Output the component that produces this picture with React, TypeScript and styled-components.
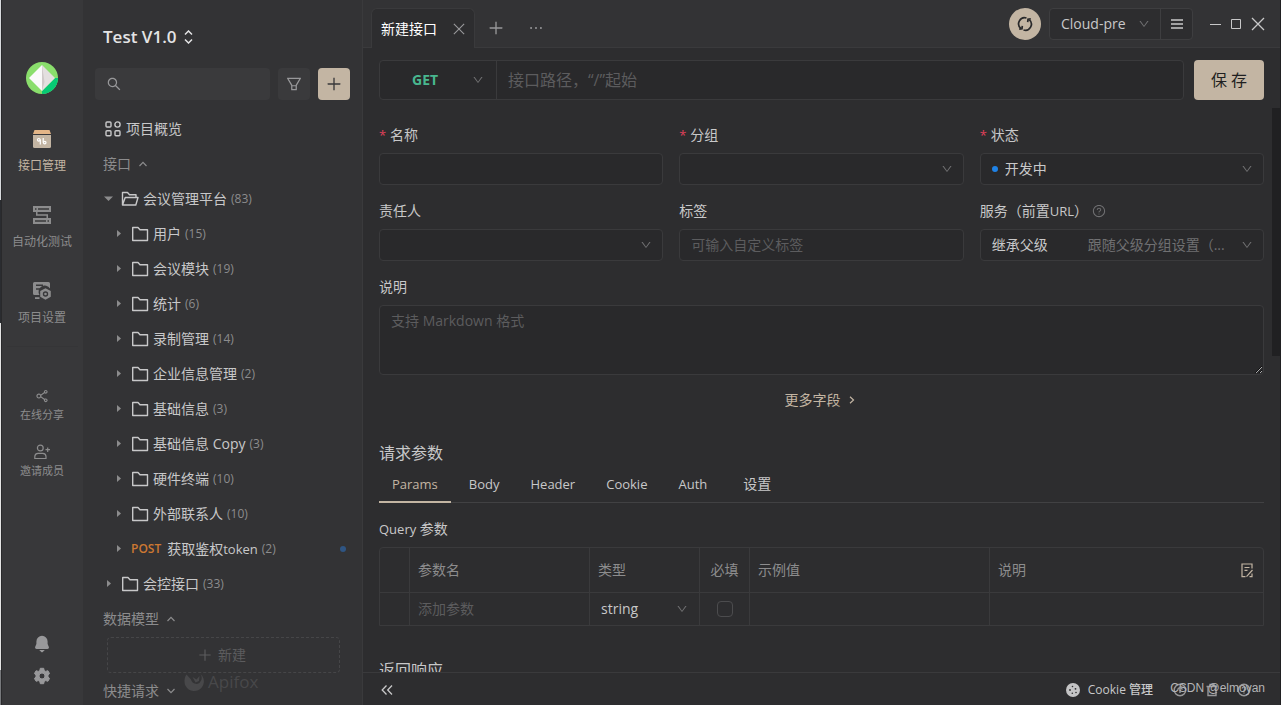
import React from "react";
import styled, { createGlobalStyle } from "styled-components";
import {
  AiOutlineClose,
  AiOutlineDown,
  AiOutlineEllipsis,
  AiOutlineFilter,
  AiOutlinePlus,
  AiOutlineQuestionCircle,
  AiOutlineSearch,
  AiOutlineShareAlt,
} from "react-icons/ai";

const c = {
  rail: "#38383a",
  side: "#333335",
  main: "#2d2d2f",
  field: "#29292b",
  line: "#3a3a3c",
  text: "#c8c8c9",
  soft: "#8c8c8d",
  faint: "#5c5c5e",
  accent: "#c3b5a3",
};

const GlobalStyle = createGlobalStyle`
  * { box-sizing: border-box; }
  body {
    margin: 0;
    background: ${c.main};
    color: ${c.text};
    font-family: "Open Sans", "Noto Sans CJK SC", sans-serif;
    font-size: 14px;
    line-height: 22px;
  }
  button, input, select, textarea {
    font: inherit;
    color: inherit;
    margin: 0;
    padding: 0;
    border: 0;
    background: none;
    outline: none;
  }
  button { cursor: pointer; }
  select { appearance: none; }
  svg { display: block; flex: none; }
  h1, h2, h3, p, ul { margin: 0; padding: 0; font-weight: 400; }
  ul { list-style: none; }
`;

const Shell = styled.div`
  display: flex;
  height: 100vh;
  overflow: hidden;
`;

const DesktopEdge = styled.div`
  width: 2px;
  flex: none;
  border-right: 1px solid #29292b;
  background: linear-gradient(#d8dadd 0 200px, #2a2c30 200px 323px, #e4e4e4 323px 670px, #77797c 670px);
`;

const Latin = styled.span`
  font-size: 13px;
`;

/* ---------- navigation rail ---------- */

const Rail = styled.nav`
  width: 81px;
  flex: none;
  background: ${c.rail};
  display: flex;
  flex-direction: column;
  align-items: center;
  padding: 62px 1px 20px 0;
`;

const RailGroup = styled.div<{ $gap: number; $top: number }>`
  display: flex;
  flex-direction: column;
  gap: ${(p) => p.$gap}px;
  margin-top: ${(p) => p.$top}px;
`;

const RailItem = styled.button<{ $active?: boolean; $small?: boolean }>`
  display: flex;
  flex-direction: column;
  align-items: center;
  gap: ${(p) => (p.$small ? 2 : 9)}px;
  width: 80px;
  font-size: ${(p) => (p.$small ? 11 : 12)}px;
  line-height: 18px;
  color: ${(p) => (p.$active ? c.accent : c.soft)};
`;

const RailDivider = styled.div`
  width: 71px;
  height: 1px;
  margin-top: 19px;
  background: #353537;
`;

const RailFoot = styled.div`
  margin-top: auto;
  display: flex;
  flex-direction: column;
  gap: 14px;
  color: #98989a;
`;

/* ---------- tree sidebar ---------- */

const Sidebar = styled.aside`
  position: relative;
  width: 280px;
  flex: none;
  background: ${c.side};
  border-right: 1px solid ${c.line};
  padding: 23px 12px 0;
  overflow: hidden;
`;

const ProjectTitle = styled.button`
  display: flex;
  align-items: center;
  gap: 7px;
  margin-left: 8px;
  height: 28px;
  font-size: 17px;
  font-weight: 600;
  color: #e4e4e5;
`;

const SearchRow = styled.div`
  display: flex;
  gap: 8px;
  margin: 17px 0 11px;
`;

const SearchBox = styled.label`
  flex: 1;
  min-width: 0;
  height: 32px;
  display: flex;
  align-items: center;
  gap: 8px;
  padding: 0 11px;
  border-radius: 4px;
  background: #3a3a3c;
  color: #98989a;
  input { flex: 1; min-width: 0; }
`;

const SquareButton = styled.button<{ $accent?: boolean }>`
  width: 32px;
  height: 32px;
  display: grid;
  place-items: center;
  border-radius: 4px;
  background: ${(p) => (p.$accent ? c.accent : "#3a3a3c")};
  color: ${(p) => (p.$accent ? "#38383a" : "#98989a")};
`;

const Row = styled.li<{ $indent: number }>`
  display: flex;
  align-items: center;
  height: 35px;
  padding-left: ${(p) => p.$indent}px;
  padding-right: 4px;
`;

const SectionRow = styled(Row)`
  gap: 8px;
  color: ${c.soft};
`;

const TreeButton = styled.button`
  display: flex;
  align-items: center;
  gap: 4px;
  white-space: nowrap;
  svg + svg { margin-left: 4px; }
`;

const Count = styled.span`
  font-size: 12px;
  color: ${c.soft};
`;

const Method = styled.span`
  margin: 0 2px 0 4px;
  font-size: 12px;
  font-weight: 600;
  color: #cd7832;
`;

const StatusDot = styled.span<{ $color: string }>`
  width: 6px;
  height: 6px;
  flex: none;
  border-radius: 50%;
  background: ${(p) => p.$color};
`;

const PushRight = styled.span`
  margin-left: auto;
`;

const NewButton = styled.button`
  display: flex;
  align-items: center;
  justify-content: center;
  gap: 5px;
  width: calc(100% - 22px);
  height: 36px;
  margin: 1px 0 0 12px;
  padding-right: 4px;
  border: 1px dashed #464648;
  border-radius: 4px;
  color: #5c5c5e;
`;

const BrandMark = styled.div`
  position: absolute;
  left: 101px;
  bottom: 12px;
  display: flex;
  align-items: center;
  gap: 4px;
  font-size: 17px;
  font-weight: 500;
  color: #48484a;
`;

/* ---------- main area ---------- */

const Main = styled.main`
  flex: 1;
  min-width: 0;
  display: flex;
  flex-direction: column;
  border-right: 1px solid #202022;
`;

const TopBar = styled.header`
  height: 48px;
  flex: none;
  display: flex;
  align-items: flex-start;
  padding: 8px 15px 0 8px;
  background: ${c.side};
  box-shadow: inset 0 -1px ${c.line};
  color: #98989a;
`;

const DocTab = styled.div`
  display: flex;
  align-items: center;
  justify-content: space-between;
  width: 104px;
  height: 40px;
  padding: 0 9px;
  border: 1px solid ${c.line};
  border-bottom: 0;
  border-radius: 6px 6px 0 0;
  background: ${c.main};
  span { color: #fff; }
`;

const TabTools = styled.div`
  display: flex;
  align-items: center;
  gap: 22px;
  height: 40px;
  margin-left: 12px;
`;

const TopRight = styled.div`
  display: flex;
  align-items: center;
  height: 32px;
  margin-left: auto;
  color: ${c.text};
`;

const SyncButton = styled.button`
  width: 32px;
  height: 32px;
  display: grid;
  place-items: center;
  border-radius: 50%;
  background: ${c.accent};
  color: #29292b;
`;

const EnvBox = styled.div`
  display: flex;
  height: 32px;
  margin: 0 16px 0 8px;
  border: 1px solid #3e3e40;
  border-radius: 4px;
  background: ${c.main};
`;

const EnvSelect = styled.label`
  display: flex;
  align-items: center;
  width: 110px;
  padding: 0 10px 0 11px;
  select { flex: 1; min-width: 0; }
  svg { color: #707072; }
`;

const EnvMenu = styled.button`
  width: 32px;
  display: grid;
  place-items: center;
  border-left: 1px solid #3e3e40;
`;

const WindowButtons = styled.div`
  display: flex;
  align-items: center;
  gap: 8px;
`;

const UrlRow = styled.div`
  display: flex;
  gap: 10px;
  padding: 12px 16px 8px;
`;

const UrlBox = styled.div`
  flex: 1;
  min-width: 0;
  display: flex;
  height: 40px;
  border: 1px solid ${c.line};
  border-radius: 4px;
  background: ${c.field};
  font-size: 16px;
  input { flex: 1; min-width: 0; padding: 0 11px; }
  input::placeholder { color: ${c.faint}; }
`;

const MethodSelect = styled.label`
  display: flex;
  align-items: center;
  width: 117px;
  padding: 0 12px 0 32px;
  border-right: 1px solid ${c.line};
  font-size: 14px;
  font-weight: 700;
  color: #48b78f;
  select { flex: 1; min-width: 0; }
  svg { color: #707072; }
`;

const SaveButton = styled.button`
  width: 70px;
  height: 40px;
  border-radius: 4px;
  background: ${c.accent};
  color: #1f1f21;
  font-size: 16px;
`;

const Scroller = styled.div`
  flex: 1;
  min-height: 0;
  display: flex;
  overflow: hidden;
`;

const ScrollTrack = styled.div`
  width: 8px;
  flex: none;
`;

const ScrollThumb = styled.div`
  height: 44%;
  background: #202022;
`;

const Content = styled.form`
  flex: 1;
  min-width: 0;
  padding: 16px 8px 0 16px;
`;

const Fields = styled.div`
  display: grid;
  grid-template-columns: repeat(3, 1fr);
  gap: 15px 16px;
`;

const Field = styled.div`
  min-width: 0;
`;

const Label = styled.label`
  display: flex;
  align-items: center;
  height: 22px;
  margin-bottom: 7px;
  svg { margin-left: 4px; color: #707072; }
`;

const Star = styled.span`
  width: 11px;
  color: #e0405a;
  font-size: 13px;
`;

const InputBox = styled.div`
  display: flex;
  align-items: center;
  gap: 7px;
  height: 32px;
  padding: 0 10px 0 11px;
  border: 1px solid ${c.line};
  border-radius: 4px;
  background: ${c.field};
  input, select { flex: 1; min-width: 0; }
  input::placeholder { color: ${c.faint}; }
  svg { color: #707072; }
`;

const ServiceBox = styled(InputBox)`
  select { flex: 0 0 89px; }
`;

const ServiceHint = styled.span`
  flex: 1;
  white-space: nowrap;
  overflow: hidden;
  color: #707072;
`;

const Description = styled.div`
  margin-top: 15px;
`;

const TextArea = styled.textarea`
  display: block;
  width: 100%;
  height: 70px;
  padding: 4px 11px;
  border: 1px solid ${c.line};
  border-radius: 4px;
  background: ${c.field};
  resize: vertical;
  &::placeholder { color: ${c.faint}; }
`;

const MoreButton = styled.button`
  display: flex;
  align-items: center;
  gap: 8px;
  margin: 14px auto 0;
  padding-right: 4px;
  color: ${c.accent};
`;

const SectionTitle = styled.h2<{ $top: number }>`
  margin-top: ${(p) => p.$top}px;
  font-size: 16px;
  line-height: 24px;
`;

const ParamTabs = styled.div`
  display: flex;
  gap: 5px;
  margin-top: 2px;
  border-bottom: 1px solid #414143;
`;

const ParamTab = styled.button<{ $active?: boolean }>`
  height: 36px;
  margin-bottom: -1px;
  padding: 0 13px;
  border-bottom: 2px solid ${(p) => (p.$active ? c.accent : "transparent")};
  color: ${(p) => (p.$active ? c.accent : c.text)};
  &:last-child { padding: 0 18px; }
`;

const TableTitle = styled.h3`
  margin: 15px 0 7px;
  font-size: 14px;
`;

const TableFrame = styled.div`
  border: 1px solid ${c.line};
  border-radius: 4px 4px 0 0;
`;

const ParamTable = styled.table`
  width: 100%;
  table-layout: fixed;
  border-collapse: separate;
  border-spacing: 0;
  th, td {
    padding: 0 8px;
    text-align: left;
    font-weight: 400;
    border-right: 1px solid ${c.line};
  }
  th:last-child, td:last-child { border-right: 0; }
  th { height: 45px; color: ${c.soft}; border-bottom: 1px solid ${c.line}; }
  td { height: 32px; }
  input::placeholder { color: ${c.faint}; }
  input[type="text"] { width: 100%; display: block; }
`;

const CenterTh = styled.th`
  && { padding: 0; text-align: center; }
`;

const HeadCell = styled.div`
  display: flex;
  align-items: center;
  justify-content: space-between;
  padding-right: 1px;
`;

const TypeSelect = styled.label`
  display: flex;
  align-items: center;
  padding: 0 3px;
  select { flex: 1; min-width: 0; }
  svg { color: #707072; }
`;

const Check = styled.input`
  appearance: none;
  display: block;
  width: 16px;
  height: 16px;
  && { margin: 0 auto; border: 1px solid #4c4c4e; }
  border-radius: 4px;
`;

const Footer = styled.footer`
  position: relative;
  flex: none;
  display: flex;
  align-items: center;
  height: 33px;
  padding: 2px 29px 0 18px;
  border-top: 1px solid ${c.line};
`;

const FootRight = styled.div`
  display: flex;
  align-items: center;
  gap: 18px;
  margin-left: auto;
`;

const CookieButton = styled.button`
  display: flex;
  align-items: center;
  gap: 8px;
  margin-right: 2px;
  font-size: 12px;
  font-weight: 500;
`;

const Credit = styled.span`
  position: absolute;
  right: 15px;
  top: 4px;
  font-family: "Liberation Sans", sans-serif;
  font-size: 12px;
  color: #b4b4b6;
`;

/* ---------- icons ---------- */

const Logo = () => (
  <svg width="32" height="32" viewBox="0 0 32 32">
    <circle cx="16" cy="16" r="16" fill="#8ade6c" />
    <path d="M32 16A16 16 0 0 1 16 32L16 29 29 16Z" fill="#07c974" />
    <path d="M16 3 3 16 16 29Z" fill="#fafafa" />
    <path d="M16 3 29 16 16 29Z" fill="#e3dfdf" />
    <path d="M16 3 18.500 20 16 29Z" fill="#cfc9c9" />
  </svg>
);

const ApiIcon = () => (
  <svg width="18" height="18" viewBox="0 0 18 18">
    <path d="M1.500 0h15L18 4H0Z" fill="#e3b587" />
    <path d="M0 5h18v11.500a1.500 1.500 0 0 1-1.500 1.500h-15A1.500 1.500 0 0 1 0 16.500Z" fill="#c3b5a3" />
    <g fill="none" stroke="#fff" strokeWidth="1.200">
      <circle cx="5.800" cy="9.800" r="1.300" />
      <path d="M7.300 9.500V14.500M10.200 8V12.500" />
      <circle cx="11.700" cy="12.600" r="1.300" />
    </g>
  </svg>
);

const AutoIcon = () => (
  <svg width="18" height="18" viewBox="0 0 18 18" fill="currentColor">
    <path fillRule="evenodd" d="M0 0h18v6H0ZM2 2.300v1.400h1.500V2.300ZM5 2.300v1.400h11V2.300Z" />
    <path fillRule="evenodd" d="M0 12h18v6H0ZM2 14.300v1.400h11v-1.400ZM14.500 14.300v1.400H16v-1.400Z" />
    <path d="M3 6h1.500v2.200H15V12h-1.500V9.800H3Z" />
  </svg>
);

const ProjectIcon = () => (
  <svg width="18" height="18" viewBox="0 0 18 18" fill="currentColor">
    <path d="M1.500 0h14A1.500 1.500 0 0 1 17 1.500V6.400A6.200 6.200 0 0 0 6.500 13H1.500A1.500 1.500 0 0 1 0 11.500v-10A1.500 1.500 0 0 1 1.500 0Z" />
    <path d="M3 3.300h7M3 7h4" stroke="#38383a" strokeWidth="1.400" />
    <path d="M2 15.200h4.500v1.800H2Z" />
    <path fillRule="evenodd" d="M12.500 6.300 17.800 9v5.800L12.500 17.800 7.200 14.800V9ZM12.500 9.300a2.700 2.700 0 1 0 0 5.400 2.700 2.700 0 0 0 0-5.400Z" />
    <circle cx="12.500" cy="12" r="1.300" />
  </svg>
);

const InviteIcon = () => (
  <svg width="16" height="16" viewBox="0 0 16 16" fill="none" stroke="currentColor" strokeWidth="1.200">
    <circle cx="6.300" cy="4" r="2.900" />
    <path d="M.8 14.500V12.500A3.300 3.300 0 0 1 4 9.300h4.800A3.300 3.300 0 0 1 12 12.500v2ZM11.500 5.700h4.500M13.700 3.400V8" />
  </svg>
);

const BellIcon = () => (
  <svg width="18" height="18" viewBox="0 0 18 18" fill="currentColor">
    <path d="M9 .8A5.600 5.600 0 0 1 14.600 6.400V9L16 12.200Q16 14 14.500 14H3.500Q2 14 2 12.200L3.400 9V6.400A5.600 5.600 0 0 1 9 .8ZM6.200 15h5.600L9.500 17.300h-1Z" />
  </svg>
);

const GearIcon = () => (
  <svg width="18" height="18" viewBox="0 0 18 18" fill="currentColor" stroke="currentColor" strokeLinejoin="round">
    <path
      fillRule="evenodd"
      d="M7.300 1.300h3.400l.5 2.200 1.500.9 2.200-.7 1.700 2.900-1.600 1.300v2.200l1.600 1.300-1.700 2.900-2.200-.7-1.500.9-.5 2.200H7.300l-.5-2.200-1.500-.9-2.200.7-1.700-2.900L3 10.100V7.900L1.400 6.600l1.700-2.900 2.200.7 1.500-.9ZM9 6a3 3 0 1 0 0 6 3 3 0 0 0 0-6Z"
    />
  </svg>
);

const SwitchIcon = () => (
  <svg width="9" height="14" viewBox="0 0 9 14" fill="none" stroke="currentColor" strokeWidth="1.500">
    <path d="M1 4.500 4.500 1 8 4.500M1 9.500 4.500 13 8 9.500" />
  </svg>
);

const OverviewIcon = () => (
  <svg width="17" height="16" viewBox="0 0 17 16" fill="none" stroke="currentColor" strokeWidth="1.400">
    <rect x="1" y="1" width="5" height="5" rx="1" />
    <circle cx="12.500" cy="3.500" r="2.600" />
    <rect x="1" y="9.700" width="5" height="5" rx="1" />
    <rect x="10" y="9.700" width="5" height="5" rx="1" />
  </svg>
);

const Caret = ({ open = false }: { open?: boolean }) => (
  <svg width="9" height="9" viewBox="0 0 9 9" fill="#8c8c8d">
    <path d={open ? "M0 2.500h9L4.500 7Z" : "M3 1v7L7 4.500Z"} />
  </svg>
);

const Fold = ({ up = false }: { up?: boolean }) => (
  <svg width="8" height="6" viewBox="0 0 8 6" fill="none" stroke="currentColor" strokeWidth="1.200">
    <path d={up ? "M.5 5 4 1.300 7.500 5" : "M.5 1 4 4.700 7.500 1"} />
  </svg>
);

const FolderIcon = ({ open = false }: { open?: boolean }) => (
  <svg width="18" height="16" viewBox="0 0 18 16" fill="none" stroke="currentColor" strokeWidth="1.400" strokeLinejoin="round">
    {open ? (
      <path d="M1.500 14V1.500H6.500L8.500 3.800H15V6.500M1.500 14 4.200 6.500H17L14.800 14Z" />
    ) : (
      <path d="M1.700 1.500H7L9 3.700H16.500V14.500H1.700Z" />
    )}
  </svg>
);

const FoxIcon = () => (
  <svg width="20" height="20" viewBox="0 0 20 20" fill="currentColor">
    <path d="M2.500 2.500 7 7.500A6.500 5.500 0 0 0 13 12 6.500 6.500 0 0 0 16.500 2 9.700 9.700 0 1 1 .5 9 9.500 9.500 0 0 1 2.500 2.500Z" />
    <path d="M8.500 5 12.500 7.500 15.500 4 15 9 11.500 10.500Z" />
  </svg>
);

const SyncIcon = () => (
  <svg width="16" height="16" viewBox="0 0 16 16" fill="none" stroke="currentColor" strokeWidth="1.700">
    <path d="M9.500 2A6 6 0 0 0 3.800 12.300M2.200 13.200 5 12.800 5.300 9.800" />
    <path d="M6.500 14A6 6 0 0 0 12.200 3.700M13.800 2.800 11 3.200 10.700 6.200" />
  </svg>
);

const MenuIcon = () => (
  <svg width="12" height="10" viewBox="0 0 12 10" fill="none" stroke="currentColor" strokeWidth="1.400">
    <path d="M0 1h12M0 5h12M0 9h12" />
  </svg>
);

const MinimizeIcon = () => (
  <svg width="13" height="13" viewBox="0 0 13 13" stroke="currentColor">
    <path d="M1 6.500h11" />
  </svg>
);

const MaximizeIcon = () => (
  <svg width="13" height="13" viewBox="0 0 13 13" fill="none" stroke="currentColor">
    <path d="M1.500 1.500h9v9h-9Z" />
  </svg>
);

const CloseIcon = ({ size = 14 }: { size?: number }) => (
  <svg width={size} height={size} viewBox="0 0 14 14" stroke="currentColor" strokeWidth="1.300">
    <path d="M1 1 13 13M13 1 1 13" />
  </svg>
);

const NextIcon = () => (
  <svg width="6" height="8" viewBox="0 0 6 8" fill="none" stroke="currentColor" strokeWidth="1.200">
    <path d="M1 .8 4.500 4 1 7.200" />
  </svg>
);

const BulkEditIcon = () => (
  <svg width="13" height="15" viewBox="0 0 13 15" fill="none" stroke="#c3b5a3" strokeWidth="1.200">
    <path d="M11 5.500V1H1v12.700h3.500M3.500 4.500h5M3.500 7.300h3M5.500 13.700 11.500 7M8.500 13.700H11V10.500" />
  </svg>
);

const CollapseIcon = () => (
  <svg width="12" height="10" viewBox="0 0 12 10" fill="none" stroke="currentColor" strokeWidth="1.300">
    <path d="M5.500.5 1.200 5 5.500 9.500M11 .5 6.700 5 11 9.500" />
  </svg>
);

const CookieIcon = () => (
  <svg width="14" height="14" viewBox="0 0 14 14">
    <circle cx="7" cy="7" r="7" fill="#c4c4c5" />
    <g fill="#2d2d2f">
      <circle cx="6.500" cy="3.500" r=".8" />
      <circle cx="4" cy="7" r=".9" />
      <circle cx="9.500" cy="5.800" r=".9" />
      <circle cx="6.300" cy="10.300" r=".8" />
      <circle cx="10" cy="9.500" r=".8" />
    </g>
  </svg>
);

const UploadIcon = () => (
  <svg width="14" height="14" viewBox="0 0 14 14" fill="none" stroke="#98989a" strokeWidth="1.400">
    <circle cx="7" cy="7" r="5.800" />
    <path d="M7 10V4M4.500 6.500 7 4l2.500 2.500" />
  </svg>
);

const TrashIcon = () => (
  <svg width="14" height="14" viewBox="0 0 14 14" fill="none" stroke="#98989a" strokeWidth="1.400">
    <path d="M1.500 3.500h11M3 3.500V12.500h8V3.500M5 3V1.500h4V3" />
  </svg>
);

const HelpIcon = () => (
  <svg width="14" height="14" viewBox="0 0 14 14" fill="none" stroke="#98989a" strokeWidth="1.400">
    <circle cx="7" cy="7" r="5.800" />
    <path d="M5.200 5.600a1.800 1.800 0 1 1 2.500 1.700L7 8.300M7 9.500v1" />
  </svg>
);

/* ---------- data ---------- */

const folders: { name: React.ReactNode; count: number }[] = [
  { name: "用户", count: 15 },
  { name: "会议模块", count: 19 },
  { name: "统计", count: 6 },
  { name: "录制管理", count: 14 },
  { name: "企业信息管理", count: 2 },
  { name: "基础信息", count: 3 },
  { name: "基础信息 Copy", count: 3 },
  { name: "硬件终端", count: 10 },
  { name: "外部联系人", count: 10 },
];

const paramTabs = ["Params", "Body", "Header", "Cookie", "Auth"];

export default function App() {
  return (
    <Shell>
      <GlobalStyle />
      <DesktopEdge />
      <Rail>
        <Logo />
        <RailGroup $gap={31} $top={36}>
          <RailItem $active><ApiIcon />接口管理</RailItem>
          <RailItem><AutoIcon />自动化测试</RailItem>
          <RailItem><ProjectIcon />项目设置</RailItem>
        </RailGroup>
        <RailDivider />
        <RailGroup $gap={20} $top={41}>
          <RailItem $small><AiOutlineShareAlt size={16} />在线分享</RailItem>
          <RailItem $small><InviteIcon />邀请成员</RailItem>
        </RailGroup>
        <RailFoot>
          <button type="button" aria-label="通知"><BellIcon /></button>
          <button type="button" aria-label="设置"><GearIcon /></button>
        </RailFoot>
      </Rail>

      <Sidebar>
        <ProjectTitle>Test V1.0 <SwitchIcon /></ProjectTitle>
        <SearchRow>
          <SearchBox>
            <AiOutlineSearch size={16} />
            <input type="text" aria-label="搜索" />
          </SearchBox>
          <SquareButton aria-label="筛选"><AiOutlineFilter size={18} /></SquareButton>
          <SquareButton $accent aria-label="添加"><AiOutlinePlus size={18} /></SquareButton>
        </SearchRow>
        <ul>
          <Row $indent={10}><TreeButton><OverviewIcon />项目概览</TreeButton></Row>
          <SectionRow $indent={8}>接口 <Fold up /></SectionRow>
          <Row $indent={9}>
            <TreeButton><Caret open /><FolderIcon open />会议管理平台 <Count>(83)</Count></TreeButton>
          </Row>
          {folders.map((f, i) => (
            <Row key={i} $indent={19}>
              <TreeButton><Caret /><FolderIcon /><span>{f.name}</span><Count>({f.count})</Count></TreeButton>
            </Row>
          ))}
          <Row $indent={19}>
            <TreeButton>
              <Caret /><Method>POST</Method><span>获取鉴权<Latin>token</Latin></span><Count>(2)</Count>
            </TreeButton>
            <PushRight><StatusDot as="div" $color="#2f5583" /></PushRight>
          </Row>
          <Row $indent={9}>
            <TreeButton><Caret /><FolderIcon />会控接口 <Count>(33)</Count></TreeButton>
          </Row>
          <SectionRow $indent={8}>数据模型 <Fold up /></SectionRow>
          <li><NewButton><AiOutlinePlus size={16} />新建</NewButton></li>
          <SectionRow $indent={8}>快捷请求 <Fold /></SectionRow>
        </ul>
        <BrandMark><FoxIcon />Apifox</BrandMark>
      </Sidebar>

      <Main>
        <TopBar>
          <DocTab><span>新建接口</span><button type="button" aria-label="关闭标签"><CloseIcon size={12} /></button></DocTab>
          <TabTools>
            <button type="button" aria-label="新标签"><AiOutlinePlus size={18} /></button>
            <button type="button" aria-label="更多"><AiOutlineEllipsis size={18} /></button>
          </TabTools>
          <TopRight>
            <SyncButton aria-label="同步"><SyncIcon /></SyncButton>
            <EnvBox>
              <EnvSelect>
                <select aria-label="环境"><option>Cloud-pre</option></select>
                <AiOutlineDown size={12} />
              </EnvSelect>
              <EnvMenu aria-label="菜单"><MenuIcon /></EnvMenu>
            </EnvBox>
            <WindowButtons>
              <button type="button" aria-label="最小化"><MinimizeIcon /></button>
              <button type="button" aria-label="最大化"><MaximizeIcon /></button>
              <button type="button" aria-label="关闭"><CloseIcon /></button>
            </WindowButtons>
          </TopRight>
        </TopBar>

        <UrlRow>
          <UrlBox>
            <MethodSelect>
              <select aria-label="请求方法"><option>GET</option></select>
              <AiOutlineDown size={12} />
            </MethodSelect>
            <input type="text" aria-label="接口路径" placeholder="接口路径，“/”起始" />
          </UrlBox>
          <SaveButton>保 存</SaveButton>
        </UrlRow>

        <Scroller>
          <Content>
            <Fields>
              <Field>
                <Label htmlFor="name"><Star>*</Star>名称</Label>
                <InputBox><input id="name" type="text" /></InputBox>
              </Field>
              <Field>
                <Label htmlFor="group"><Star>*</Star>分组</Label>
                <InputBox><select id="group"><option></option></select><AiOutlineDown size={12} /></InputBox>
              </Field>
              <Field>
                <Label htmlFor="status"><Star>*</Star>状态</Label>
                <InputBox>
                  <StatusDot $color="#1f82e6" />
                  <select id="status"><option>开发中</option></select>
                  <AiOutlineDown size={12} />
                </InputBox>
              </Field>
              <Field>
                <Label htmlFor="owner">责任人</Label>
                <InputBox><select id="owner"><option></option></select><AiOutlineDown size={12} /></InputBox>
              </Field>
              <Field>
                <Label htmlFor="tags">标签</Label>
                <InputBox><input id="tags" type="text" placeholder="可输入自定义标签" /></InputBox>
              </Field>
              <Field>
                <Label htmlFor="service">
                  服务（前置<Latin>URL</Latin>）<AiOutlineQuestionCircle size={14} />
                </Label>
                <ServiceBox>
                  <select id="service"><option>继承父级</option></select>
                  <ServiceHint>跟随父级分组设置（...</ServiceHint>
                  <AiOutlineDown size={12} />
                </ServiceBox>
              </Field>
            </Fields>
            <Description>
              <Label htmlFor="desc">说明</Label>
              <TextArea id="desc" placeholder="支持 Markdown 格式" />
            </Description>
            <MoreButton type="button">更多字段 <NextIcon /></MoreButton>

            <SectionTitle $top={30}>请求参数</SectionTitle>
            <ParamTabs role="tablist">
              {paramTabs.map((t, i) => (
                <ParamTab key={t} type="button" role="tab" $active={i === 0}><Latin>{t}</Latin></ParamTab>
              ))}
              <ParamTab type="button" role="tab">设置</ParamTab>
            </ParamTabs>

            <TableTitle><Latin>Query</Latin> 参数</TableTitle>
            <TableFrame>
              <ParamTable>
                <colgroup>
                  <col width="30" /><col width="180" /><col width="110" />
                  <col width="50" /><col width="240" /><col />
                </colgroup>
                <thead>
                  <tr>
                    <th /><th>参数名</th><th>类型</th><CenterTh>必填</CenterTh><th>示例值</th>
                    <th>
                      <HeadCell>说明<button type="button" aria-label="批量编辑"><BulkEditIcon /></button></HeadCell>
                    </th>
                  </tr>
                </thead>
                <tbody>
                  <tr>
                    <td />
                    <td><input type="text" aria-label="参数名" placeholder="添加参数" /></td>
                    <td>
                      <TypeSelect>
                        <select aria-label="类型"><option>string</option></select>
                        <AiOutlineDown size={12} />
                      </TypeSelect>
                    </td>
                    <td><Check type="checkbox" aria-label="必填" /></td>
                    <td />
                    <td />
                  </tr>
                </tbody>
              </ParamTable>
            </TableFrame>
            <SectionTitle $top={32}>返回响应</SectionTitle>
          </Content>
          <ScrollTrack><ScrollThumb /></ScrollTrack>
        </Scroller>

        <Footer>
          <button type="button" aria-label="收起侧栏"><CollapseIcon /></button>
          <FootRight>
            <CookieButton><CookieIcon />Cookie 管理</CookieButton>
            <button type="button" aria-label="上传"><UploadIcon /></button>
            <button type="button" aria-label="回收站"><TrashIcon /></button>
            <button type="button" aria-label="帮助"><HelpIcon /></button>
          </FootRight>
          <Credit>CSDN @elmoyan</Credit>
        </Footer>
      </Main>
    </Shell>
  );
}
